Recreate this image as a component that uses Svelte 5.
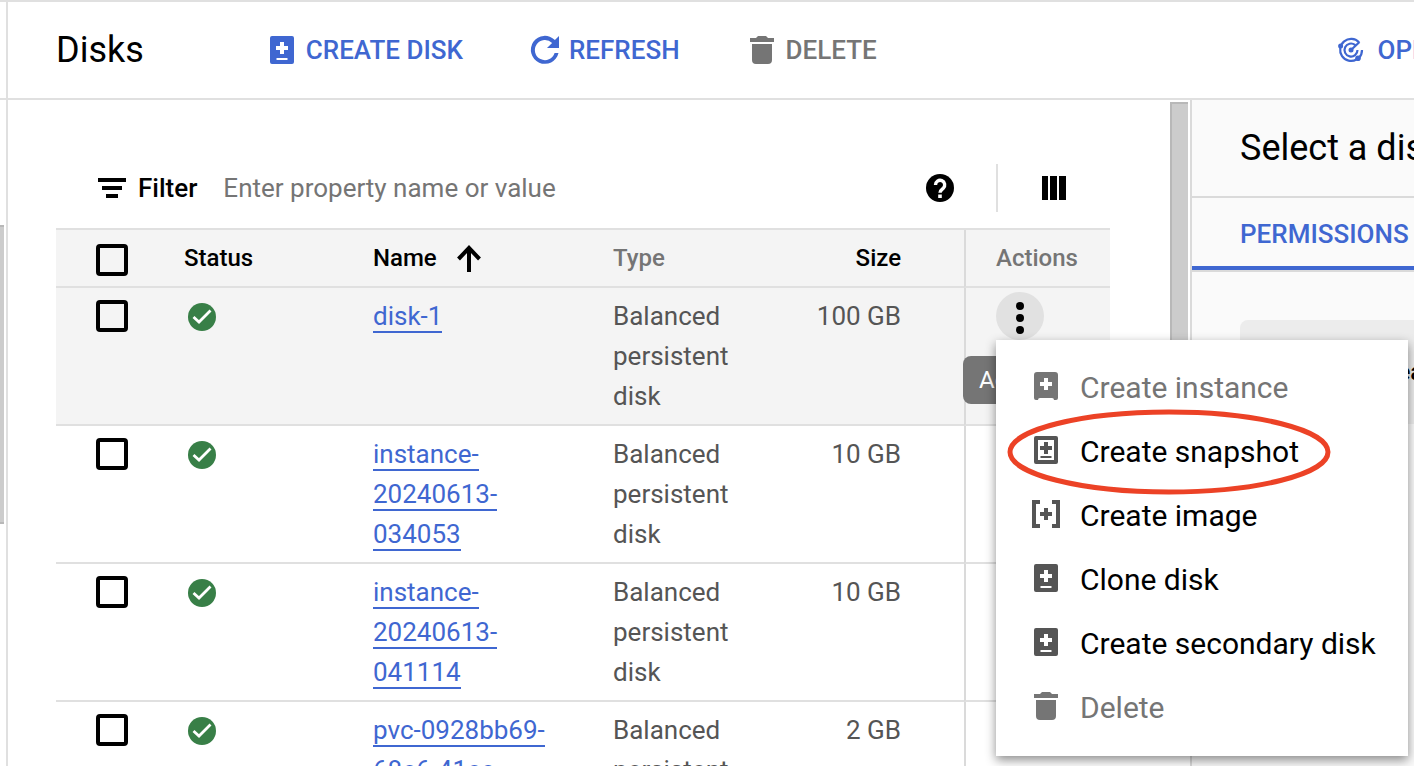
<script>
  const disks = [
    { lines: ['disk-1'], size: '100 GB', hover: true },
    { lines: ['instance-', '20240613-', '034053'], size: '10 GB' },
    { lines: ['instance-', '20240613-', '041114'], size: '10 GB' },
    { lines: ['pvc-0928bb69-', '68e6-41ee-'], size: '2 GB' }
  ];
  const actions = [
    { label: 'Create instance', icon: 'instance', disabled: true },
    { label: 'Create snapshot', icon: 'snapshot' },
    { label: 'Create image', icon: 'image' },
    { label: 'Clone disk', icon: 'disk' },
    { label: 'Create secondary disk', icon: 'disk' },
    { label: 'Delete', icon: 'trash', disabled: true }
  ];
</script>

{#snippet icon(name)}
  <svg class="icon" viewBox="0 0 28 28" aria-hidden="true">
    {#if name === 'disk'}
      <path fill-rule="evenodd" d="M4 0h20a2 2 0 0 1 2 2v24a2 2 0 0 1-2 2H4a2 2 0 0 1-2-2V2a2 2 0 0 1 2-2zM12 6v4H8v4h4v4h4v-4h4v-4h-4V6zM8.500 22v2h11v-2z" />
    {:else if name === 'instance'}
      <path fill-rule="evenodd" d="M5 0h18a3 3 0 0 1 3 3v23a2 2 0 0 1-2 2h-2a2 2 0 0 0-2-2H8a2 2 0 0 0-2 2H4a2 2 0 0 1-2-2V3a3 3 0 0 1 3-3zM12 6v4H8v4h4v4h4v-4h4v-4h-4V6z" />
    {:else if name === 'snapshot'}
      <path fill-rule="evenodd" d="M4 0h20a2 2 0 0 1 2 2v24a2 2 0 0 1-2 2H4a2 2 0 0 1-2-2V2a2 2 0 0 1 2-2zM6 4v20h16V4zM12 6h4v4h4v4h-4v4h-4v-4H8v-4h4zM8.500 20h11v2h-11z" />
    {:else if name === 'image'}
      <path d="M0 0h8v4H4v20h4v4H0zM20 0h8v28h-8v-4h4V4h-4zM12 8h4v4h4v4h-4v4h-4v-4H8v-4h4z" />
    {:else if name === 'trash'}
      <path d="M8 2l2-2h8l2 2h6v4H2V2zM4 8h20v16a4 4 0 0 1-4 4H8a4 4 0 0 1-4-4z" />
    {:else if name === 'refresh'}
      <path d="M23.900 4.100A14 14 0 1 0 27.500 17h-3.900A10.100 10.100 0 1 1 21.100 6.900L16 12h12V0z" />
    {:else if name === 'radar'}
      <g fill="none" stroke="currentColor" stroke-width="2.200">
        <path d="M22 6.200A11 11 0 1 0 19.500 23.500M25 14A11 11 0 0 1 22 21.800" />
        <path d="M18 8.900A6.500 6.500 0 1 0 20.500 14M14 14L22.500 6" />
      </g>
      <circle cx="3.600" cy="10" r="2.500" /><circle cx="21" cy="22.200" r="2.800" /><circle cx="14" cy="14" r="2.500" />
    {:else if name === 'filter'}
      <path d="M0 4h28v4H0zM4 12h20v4H4zM8 20h12v4H8z" />
    {:else if name === 'help'}
      <circle cx="14" cy="14" r="14" />
      <path d="M9.500 11a4.600 4.600 0 1 1 7.800 3.200C15.500 15.700 14 16.500 14 18.800" fill="none" stroke="#fff" stroke-width="3.400" />
      <path fill="#fff" d="M12.200 20.500h3.600v3.500h-3.600z" />
    {:else if name === 'columns'}
      <path d="M2 2h6v24H2zM10 2h7v24h-7zM19 2h7v24h-7z" />
    {:else if name === 'arrow'}
      <path d="M14 28V4M3.500 15L14 4l10.500 11" fill="none" stroke="currentColor" stroke-width="4" />
    {:else if name === 'check'}
      <circle cx="14" cy="14" r="14" fill="#387f47" />
      <path d="M5.500 14L11 19 22.500 7.500" fill="none" stroke="#fff" stroke-width="2.800" />
    {:else if name === 'more'}
      <circle cx="14" cy="4" r="4" /><circle cx="14" cy="16" r="4" /><circle cx="14" cy="28" r="4" />
    {/if}
  </svg>
{/snippet}

<div class="shell">
  <div class="edge"><span class="edge-thumb"></span></div>
  <div class="page">
    <header>
      <h1>Disks</h1>
      <button class="tool">{@render icon('disk')}CREATE DISK</button>
      <button class="tool">{@render icon('refresh')}REFRESH</button>
      <button class="tool muted" disabled>{@render icon('trash')}DELETE</button>
      <button class="tool ops">{@render icon('radar')}OPERATIONS</button>
    </header>

    <div class="body">
      <main>
        <div class="filter">
          {@render icon('filter')}
          <label for="filter">Filter</label>
          <input id="filter" type="text" placeholder="Enter property name or value" />
          <button class="plain" aria-label="Help">{@render icon('help')}</button>
          <button class="plain cols" aria-label="Column display options">{@render icon('columns')}</button>
        </div>
        <table>
          <colgroup><col class="c-check" /><col class="c-status" /><col class="c-name" /><col class="c-type" /><col class="c-size" /><col /></colgroup>
          <thead>
            <tr>
              <th><input type="checkbox" aria-label="Select all disks" /></th>
              <th>Status</th>
              <th><span class="sort">Name {@render icon('arrow')}</span></th>
              <th class="soft">Type</th>
              <th class="num">Size</th>
              <th class="soft act">Actions</th>
            </tr>
          </thead>
          <tbody>
            {#each disks as disk}
              <tr class:hover={disk.hover}>
                <td><input type="checkbox" aria-label={'Select ' + disk.lines.join('')} /></td>
                <td class="state">{@render icon('check')}</td>
                <td><a href="#disk">{#each disk.lines as line}{line}<wbr />{/each}</a></td>
                <td>Balanced persistent disk</td>
                <td class="num">{disk.size}</td>
                <td class="act">
                  {#if disk.hover}
                    <div class="anchor">
                      <button class="more" aria-label="Actions">{@render icon('more')}</button>
                      <span class="tip">Actions</span>
                      <div class="menu">
                        {#each actions as action}
                          <button class:muted={action.disabled} disabled={action.disabled}>
                            {@render icon(action.icon)}<span>{action.label}</span>
                          </button>
                        {/each}
                        <svg class="ring" viewBox="0 0 324 86" aria-hidden="true"><ellipse cx="162" cy="43" rx="159" ry="40" /></svg>
                      </div>
                    </div>
                  {/if}
                </td>
              </tr>
            {/each}
          </tbody>
        </table>
      </main>
      <div class="track"></div>
      <aside>
        <h2>Select a disk</h2>
        <nav><a href="#permissions">PERMISSIONS</a></nav>
        <p>Please select at least one resource.</p>
      </aside>
    </div>
  </div>
</div>

<style>
  :global(body) { margin: 0; overflow: hidden; background: #fff; }
  .shell {
    box-sizing: border-box; height: 100vh; overflow: hidden; display: flex;
    font: 26px/40px Roboto, sans-serif; color: #000; border-top: 2px solid #e0e0e0;
  }
  button { font: inherit; color: inherit; background: none; border: 0; padding: 0; margin: 0; }
  .icon { width: 28px; height: 28px; flex: none; display: block; fill: currentColor; overflow: visible; }
  .edge { box-sizing: border-box; width: 8px; flex: none; border-right: 2px solid #e0e0e0; background: linear-gradient(#e0e0e0, #e0e0e0) 0 96px / 100% 2px no-repeat; }
  .edge-thumb { display: block; box-sizing: border-box; width: 4px; height: 299px; margin-top: 223px; background: #ccc; border: solid #b8b8b8; border-width: 2px 0; }
  .page { flex: 1; min-width: 0; display: flex; flex-direction: column; }
  header { box-sizing: border-box; height: 98px; flex: none; display: flex; align-items: center; padding-left: 48px; border-bottom: 2px solid #e0e0e0; overflow: hidden; }
  h1 { font-size: 36px; line-height: 48px; font-weight: 400; margin: 0 124px 0 0; }
  .tool { display: flex; align-items: center; gap: 10px; flex: none; color: #3f67d1; font-weight: 500; margin-right: 68px; }
  .tool.muted { color: #757575; }
  .tool.ops { gap: 12px; margin: 0 -120px 0 auto; }
  .body { flex: 1; min-height: 0; display: flex; }
  main { flex: 1; min-width: 0; padding: 48px 60px 0 48px; }
  .filter { display: flex; align-items: center; height: 80px; padding-left: 42px; }
  .filter label { font-weight: 500; margin: 0 26px 0 12px; }
  .filter input { flex: 1; min-width: 0; border: 0; outline: 0; padding: 0; font: inherit; background: none; }
  .filter input::placeholder { color: #757575; opacity: 1; }
  .cols { border-left: 2px solid #e0e0e0; padding: 10px 42px; margin-left: 42px; }
  table { width: 100%; table-layout: fixed; border-collapse: separate; border-spacing: 0; border-top: 2px solid #e0e0e0; }
  .c-check { width: 112px; }
  .c-status { width: 189px; }
  .c-name { width: 240px; }
  .c-type { width: 180px; }
  .c-size { width: 187px; }
  th, td { box-sizing: border-box; text-align: left; vertical-align: top; font-weight: 400; color: #555; padding: 8px 16px 8px; border-bottom: 2px solid #e0e0e0; }
  th { height: 58px; color: #000; font-size: 24px; font-weight: 500; background: #f4f4f4; }
  td { height: 138px; }
  .hover td { background: #f4f4f4; }
  th.soft { color: #757575; }
  th:first-child, td:first-child { padding-left: 40px; }
  .num { text-align: right; padding-right: 63px; white-space: nowrap; }
  .act { border-left: 2px solid #dadada; padding-left: 30px; }
  .sort { display: flex; align-items: center; gap: 18px; }
  input[type='checkbox'] { appearance: none; display: block; box-sizing: border-box; width: 32px; height: 32px; margin: 4px 0 0; border: 4px solid #000; border-radius: 4px; }
  th input[type='checkbox'] { margin-top: 6px; }
  td.state { padding: 15px 20px; }
  td a { color: #3f67d1; text-decoration: none; border-bottom: 2px solid #3f67d1; }
  .anchor { position: relative; width: 48px; }
  .more { display: grid; place-items: center; width: 48px; height: 48px; margin-top: -4px; border-radius: 50%; background: #e1e1e1; color: #000; }
  .tip { position: absolute; left: -33px; top: 64px; box-sizing: border-box; height: 48px; padding: 4px 16px; border-radius: 8px; background: #757575; color: #fff; font-size: 24px; }
  .menu { position: absolute; z-index: 2; left: 0; top: 48px; box-sizing: border-box; width: 412px; padding: 16px 0; background: #fff; color: #000; box-shadow: 0 4px 10px rgb(0 0 0 / 45%); }
  .menu button { display: flex; align-items: center; gap: 20px; width: 100%; height: 64px; padding-left: 36px; font-size: 30px; text-align: left; }
  .menu .icon { color: #555; margin-bottom: 4px; }
  .menu .muted, .menu .muted .icon { color: #757575; }
  .ring { position: absolute; left: 11px; top: 69px; width: 324px; height: 86px; pointer-events: none; }
  .ring ellipse { fill: none; stroke: #ec4226; stroke-width: 5; }
  .track { box-sizing: border-box; width: 18px; flex: none; margin: 2px 2px 48px 0; background: #ccc; border: solid #b8b8b8; border-width: 2px 0 0 2px; }
  aside { box-sizing: border-box; width: 224px; flex: none; overflow: hidden; white-space: nowrap; background: #fafafa; border-left: 2px solid #dadada; }
  h2 { box-sizing: border-box; height: 98px; margin: 0; padding: 24px 48px; font-size: 36px; line-height: 48px; font-weight: 400; border-bottom: 2px solid #dadada; }
  nav { border-bottom: 2px solid #dadada; }
  nav a { display: block; box-sizing: border-box; height: 72px; padding: 16px 48px; color: #3f67d1; font-weight: 500; text-decoration: none; border-bottom: 4px solid #3f67d1; }
  p { box-sizing: border-box; width: 480px; height: 104px; margin: 48px 0 0 48px; padding: 32px 0 32px 136px; background: #ececec; border-radius: 8px; font-size: 24px; font-weight: 500; }
</style>
